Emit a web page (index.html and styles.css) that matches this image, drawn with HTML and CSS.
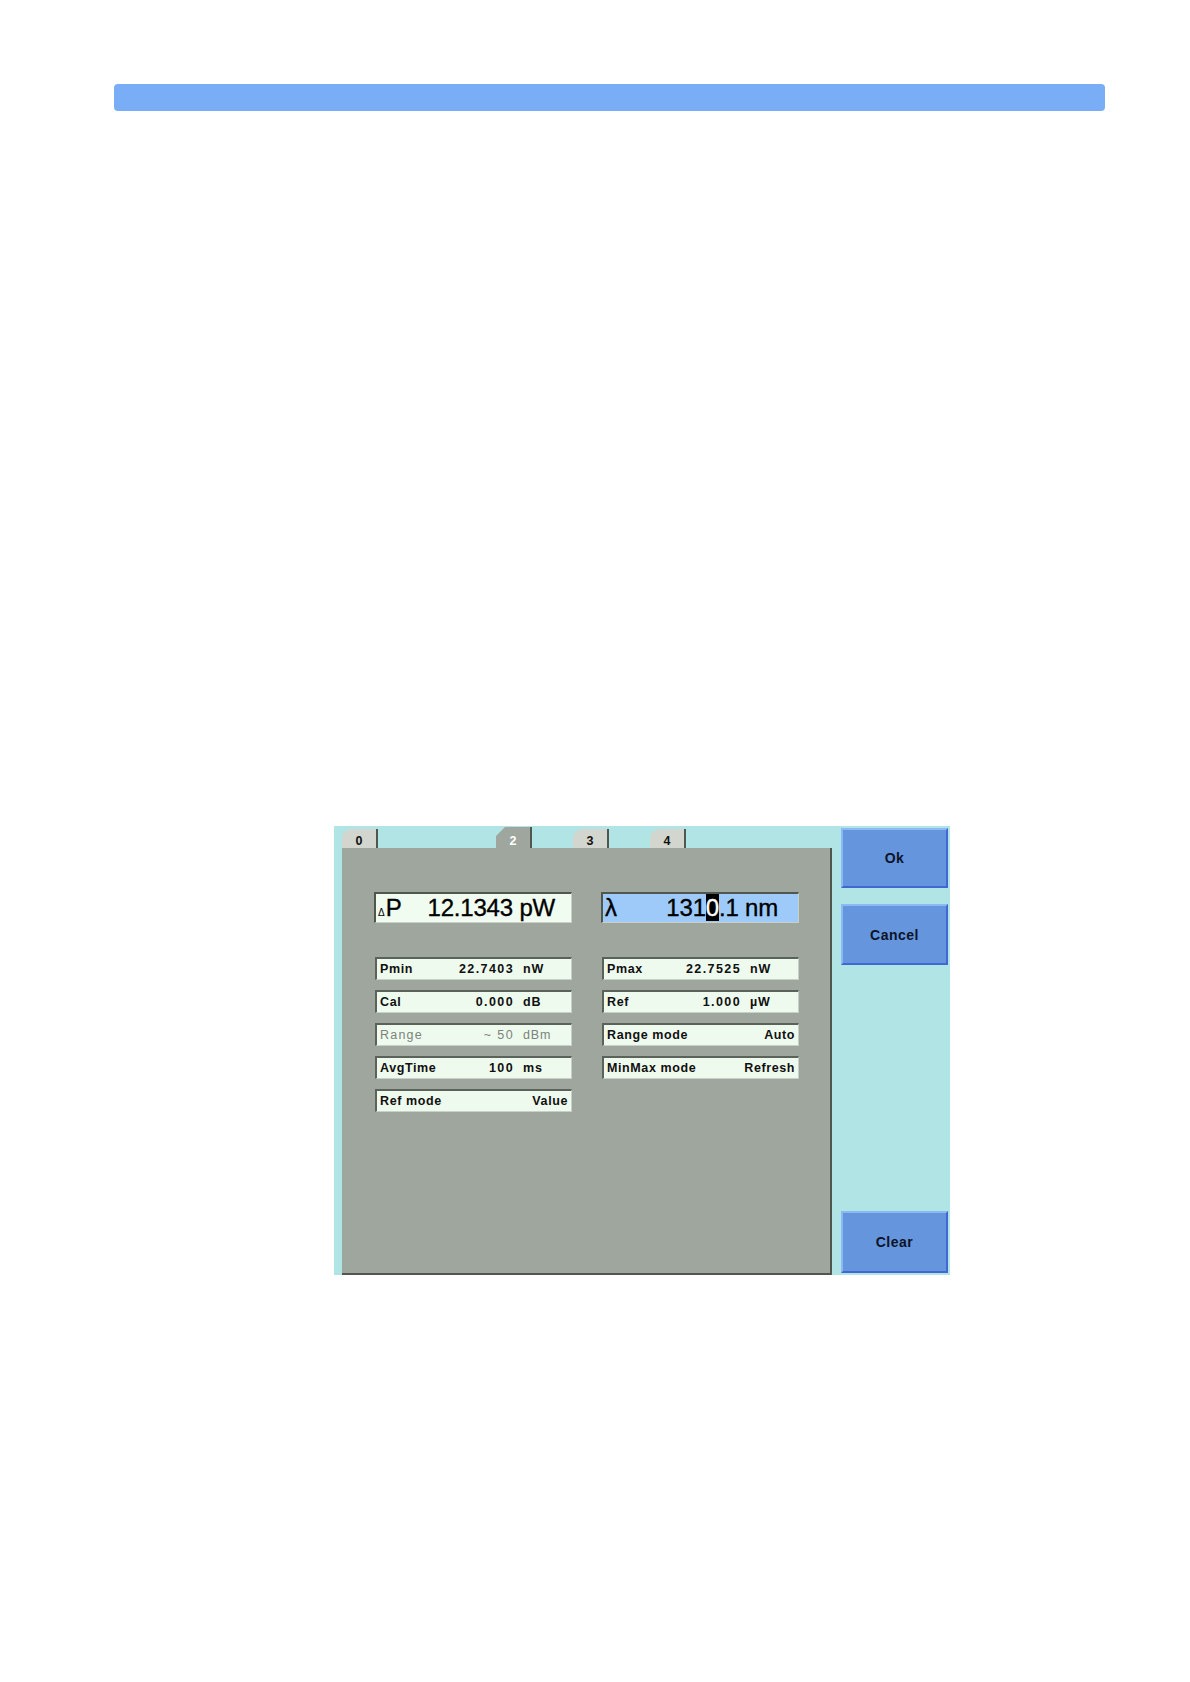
FILE: index.html
```html
<!DOCTYPE html>
<html>
<head>
<meta charset="utf-8">
<link rel="stylesheet" href="styles.css">
</head>
<body>
<div class="page">
  <div class="topbar"></div>
  <div class="screen">
    <div class="main">
      <div class="tabs">
        <div class="tab">0</div>
        <div class="tab-slot"></div>
        <div class="tab active">2</div>
        <div class="tab">3</div>
        <div class="tab">4</div>
      </div>
      <div class="panel">
        <div class="bigrow">
          <div class="big light">
            <span class="sym"><span class="delta">&#916;</span>P</span>
            <span class="bigval">12.1343 pW</span>
          </div>
          <div class="big blue">
            <span class="sym">&#955;</span>
            <span class="bigval">131<span class="cursor">0</span>.1 nm</span>
          </div>
        </div>
        <div class="fields">
          <div class="col">
            <div class="field num"><span class="lbl">Pmin</span><span class="val">22.7403</span><span class="unit">nW</span></div>
            <div class="field num"><span class="lbl">Cal</span><span class="val">0.000</span><span class="unit">dB</span></div>
            <div class="field num disabled"><span class="lbl">Range</span><span class="val">~ 50</span><span class="unit">dBm</span></div>
            <div class="field num"><span class="lbl">AvgTime</span><span class="val">100</span><span class="unit">ms</span></div>
            <div class="field txt"><span class="lbl">Ref mode</span><span class="val">Value</span></div>
          </div>
          <div class="col">
            <div class="field num"><span class="lbl">Pmax</span><span class="val">22.7525</span><span class="unit">nW</span></div>
            <div class="field num"><span class="lbl">Ref</span><span class="val">1.000</span><span class="unit">&#181;W</span></div>
            <div class="field txt"><span class="lbl">Range mode</span><span class="val">Auto</span></div>
            <div class="field txt"><span class="lbl">MinMax mode</span><span class="val">Refresh</span></div>
          </div>
        </div>
      </div>
    </div>
    <div class="buttons">
      <div class="btn ok">Ok</div>
      <div class="btn cancel">Cancel</div>
      <div class="btn clear">Clear</div>
    </div>
  </div>
</div>
</body>
</html>
```
FILE: styles.css
```css
html, body {
  margin: 0;
  padding: 0;
  background: #ffffff;
}

.page {
  font-family: "Liberation Sans", Arial, sans-serif;
  padding-top: 84px;
}

.topbar {
  margin-left: 114px;
  width: 991px;
  height: 27px;
  background: #79adf6;
  border-radius: 4px;
}

.screen {
  margin-top: 715px;
  margin-left: 334px;
  width: 616px;
  height: 449px;
  background: #b1e4e4;
  display: flex;
}

.main {
  width: 498px;
  padding-left: 8px;
  box-sizing: border-box;
  display: flex;
  flex-direction: column;
}

.tabs {
  height: 22px;
  display: grid;
  grid-template-columns: repeat(5, 77px);
  align-items: end;
}

.tab {
  width: 36px;
  height: 19px;
  box-sizing: border-box;
  background: #d2d6ce;
  border-right: 2px solid #4f574f;
  border-top-left-radius: 10px 9px;
  font-weight: bold;
  font-size: 12.5px;
  line-height: 25px;
  text-align: center;
  color: #101010;
  overflow: hidden;
}

.tab.active {
  height: 21px;
  background: #9fa69e;
  color: #ffffff;
  border-radius: 0;
  clip-path: polygon(9px 0, 100% 0, 100% 100%, 0 100%, 0 9px);
  line-height: 29px;
}

.panel {
  flex: 1;
  background: #9fa69e;
  border-right: 2px solid #4f574f;
  border-bottom: 2px solid #4f574f;
  box-sizing: border-box;
  padding: 44px 0 0 32px;
}

.bigrow {
  display: grid;
  grid-template-columns: 198px 198px;
  column-gap: 29px;
}

.big {
  height: 31px;
  box-sizing: border-box;
  border-top: 2px solid #4f574f;
  border-left: 2px solid #4f574f;
  border-bottom: 1px solid #c9d0c9;
  border-right: 1px solid #c9d0c9;
  display: flex;
  align-items: center;
  padding: 0 16px 0 2px;
  font-size: 24px;
  color: #000;
  letter-spacing: -0.2px;
  -webkit-text-stroke: 0.35px #000;
}

.big.light {
  background: #f0fcf0;
}

.big.blue {
  background: #9dcaf8;
  padding-right: 20px;
}

.sym {
  display: flex;
  align-items: baseline;
}

.delta {
  font-size: 10px;
  margin-right: 1px;
  letter-spacing: 0;
  -webkit-text-stroke: 0;
}

.bigval {
  margin-left: auto;
  white-space: pre;
}

.cursor {
  background: #000;
  color: #fff;
  -webkit-text-stroke: 0.35px #fff;
}

.fields {
  margin-top: 34px;
  display: grid;
  grid-template-columns: 198px 198px;
  column-gap: 29px;
  padding-left: 1px;
}

.col {
  display: flex;
  flex-direction: column;
  gap: 10px;
}

.field {
  width: 197px;
  height: 23px;
  box-sizing: border-box;
  background: #eefaee;
  border-top: 2px solid #5a625a;
  border-left: 2px solid #5a625a;
  border-bottom: 1px solid #c8d0c8;
  border-right: 1px solid #c8d0c8;
  display: flex;
  align-items: center;
  padding-left: 3px;
  font-size: 12.5px;
  font-weight: bold;
  color: #101010;
  letter-spacing: 0.6px;
  white-space: pre;
}

.field .val {
  margin-left: auto;
}

.field.num .val {
  letter-spacing: 1.4px;
  margin-right: -1px;
}

.field.num .unit {
  width: 48px;
  margin-left: 10px;
  letter-spacing: 0.8px;
}

.field.txt {
  padding-right: 3px;
}

.field.disabled {
  color: #7b837b;
  font-weight: normal;
  letter-spacing: 1.2px;
}

.buttons {
  margin-left: 9px;
  width: 107px;
  display: flex;
  flex-direction: column;
  padding: 2px 0;
  box-sizing: border-box;
}

.btn {
  box-sizing: border-box;
  background: #6595dd;
  border-top: 2px solid #8cb8f4;
  border-left: 2px solid #8cb8f4;
  border-bottom: 2px solid #4266d2;
  border-right: 2px solid #4266d2;
  display: flex;
  align-items: center;
  justify-content: center;
  font-weight: bold;
  font-size: 14px;
  letter-spacing: 0.5px;
  color: #0c1428;
}

.btn.ok {
  height: 60px;
}

.btn.cancel {
  height: 61px;
  margin-top: 16px;
}

.btn.clear {
  height: 62px;
  margin-top: auto;
}
```
